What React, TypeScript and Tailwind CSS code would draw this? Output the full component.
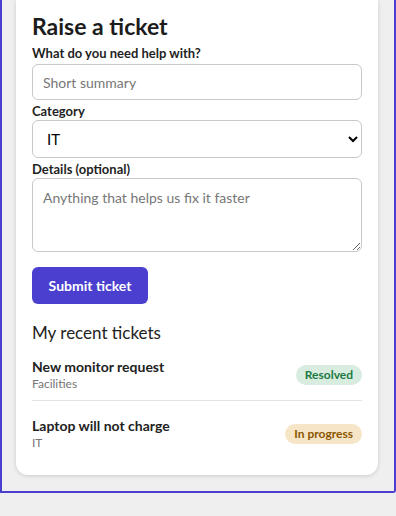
import { useState } from "react";

type Ticket = { title: string; category: string; status: "resolved" | "progress" };

const TICKETS: Ticket[] = [
  { title: "New monitor request", category: "Facilities", status: "resolved" },
  { title: "Laptop will not charge", category: "IT", status: "progress" },
];

function StatusBadge({ status }: { status: Ticket["status"] }) {
  if (status === "resolved") {
    return (
      <span className="rounded-full bg-[#d8ecdf] px-[9px] py-[2px] text-[12px] font-bold leading-4 text-[#1d7a44]">
        Resolved
      </span>
    );
  }
  return (
    <span className="rounded-full bg-[#f6e5c6] px-[9px] py-[2px] text-[12px] font-bold leading-4 text-[#8a5700]">
      In progress
    </span>
  );
}

export default function App() {
  const [summary, setSummary] = useState("");
  const [category, setCategory] = useState("IT");
  const [details, setDetails] = useState("");

  return (
    <div className="min-h-screen bg-[#efefef] font-['Lato',sans-serif] text-[#1f1f1f]">
      <div className="w-[396px] rounded-br-[3px] border-x-2 border-b-2 border-[#4a3fcf] pb-[16px] pl-[14px] pr-[16px]">
        <div className="rounded-b-xl bg-white px-4 pb-[16px] pt-[11px] shadow-[0_1px_4px_rgba(0,0,0,0.15)]">
          <h1 className="text-[23px] font-bold leading-[30px] text-[#1c1c1c]">Raise a ticket</h1>

          <label className="mt-[3px] block text-[13px] font-bold leading-[18px]">
            What do you need help with?
          </label>
          <input
            value={summary}
            onChange={(e) => setSummary(e.target.value)}
            placeholder="Short summary"
            className="mt-[2px] block h-[36px] w-full rounded-md border border-[#c9c9c9] px-[10px] text-[14px] placeholder:text-[#777]"
          />

          <label className="mt-[2px] block text-[13px] font-bold leading-[18px]">Category</label>
          <select
            value={category}
            onChange={(e) => setCategory(e.target.value)}
            className="block h-[38px] w-full rounded-md border border-[#c9c9c9] bg-white px-[10px] text-[15px] text-black"
          >
            <option>IT</option>
            <option>Facilities</option>
            <option>HR</option>
          </select>

          <label className="mt-[2px] block text-[13px] font-bold leading-[18px]">
            Details (optional)
          </label>
          <textarea
            value={details}
            onChange={(e) => setDetails(e.target.value)}
            placeholder="Anything that helps us fix it faster"
            className="block h-[74px] w-full rounded-md border border-[#c9c9c9] px-[10px] py-[8px] text-[14px] placeholder:text-[#777]"
          />

          <button
            type="button"
            className="mt-[15px] h-[37px] w-[116px] rounded-md bg-[#4a3fcf] text-[14px] font-bold text-white"
          >
            Submit ticket
          </button>

          <h2 className="mt-[17px] text-[17px] font-normal leading-6 text-[#222]">My recent tickets</h2>

          <ul className="mt-[5px]">
            {TICKETS.map((t, i) => (
              <li
                key={t.title}
                className={`flex items-center justify-between pb-[8px] ${i > 0 ? "border-t border-[#e4e4e4] pt-[16px]" : "pt-[8px]"}`}
              >
                <div>
                  <div className="text-[14px] font-bold leading-[18px] text-[#222]">{t.title}</div>
                  <div className="text-[12px] leading-[16px] text-[#777]">{t.category}</div>
                </div>
                <StatusBadge status={t.status} />
              </li>
            ))}
          </ul>
        </div>
      </div>
    </div>
  );
}
